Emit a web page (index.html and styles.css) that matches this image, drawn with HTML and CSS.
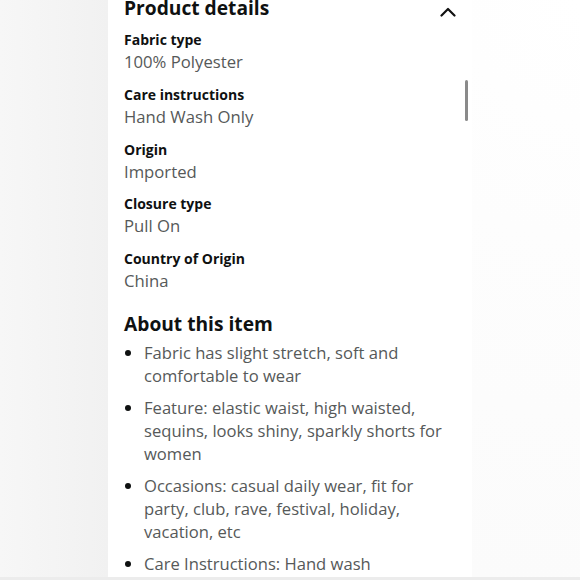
FILE: index.html
```html
<!DOCTYPE html>
<html>
<head>
<meta charset="utf-8">
<link rel="stylesheet" href="styles.css">
</head>
<body>
<div class="page">
  <div class="gutter-left"></div>
  <main class="panel">
    <div class="head-row">
      <h2 class="title">Product details</h2>
      <svg class="chev" width="16" height="10" viewBox="0 0 16 10"><path d="M1.5 8.5 L8 2 L14.5 8.5" fill="none" stroke="#111" stroke-width="2.2" stroke-linecap="round" stroke-linejoin="round"/></svg>
    </div>
    <div class="scrollbar"></div>
    <dl class="details">
      <div class="detail"><dt>Fabric type</dt><dd>100% Polyester</dd></div>
      <div class="detail"><dt>Care instructions</dt><dd>Hand Wash Only</dd></div>
      <div class="detail"><dt>Origin</dt><dd>Imported</dd></div>
      <div class="detail"><dt>Closure type</dt><dd>Pull On</dd></div>
      <div class="detail"><dt>Country of Origin</dt><dd>China</dd></div>
    </dl>
    <h2 class="title about">About this item</h2>
    <ul class="bullets">
      <li>Fabric has slight stretch, soft and comfortable to wear</li>
      <li>Feature: elastic waist, high waisted, sequins, looks shiny, sparkly shorts for women</li>
      <li>Occasions: casual daily wear, fit for party, club, rave, festival, holiday, vacation, etc</li>
      <li>Care Instructions: Hand wash recommended, dry naturally, do not bleach</li>
    </ul>
  </main>
  <div class="gutter-right"></div>
</div>
<div class="bottom-strip"></div>
</body>
</html>
```
FILE: styles.css
```css
html, body {
  margin: 0;
  padding: 0;
  height: 580px;
  overflow: hidden;
  background: #f7f7f7;
  font-family: "Open Sans", "Noto Sans", sans-serif;
}
.page {
  display: flex;
  height: 577px;
  overflow: hidden;
}
.gutter-left {
  width: 108px;
  flex: none;
  background: linear-gradient(to right, #f7f7f7 0%, #f1f1f1 100%);
}
.gutter-right {
  flex: 1;
  background: radial-gradient(circle at 100% 0%, #ffffff 0, #fdfdfd 40%, #fbfbfb 100%);
}
.panel {
  position: relative;
  width: 364px;
  flex: none;
  background: #fff;
  padding: 0 16px;
  box-sizing: border-box;
}
.head-row {
  display: flex;
  align-items: flex-start;
  justify-content: space-between;
  margin-top: -6px;
  padding-right: 0;
}
.title {
  margin: 0;
  font-size: 19.2px;
  font-weight: 700;
  color: #0f1111;
  line-height: 28px;
}
.chev {
  display: block;
  margin-top: 13px;
}
.scrollbar {
  position: absolute;
  left: 357px;
  top: 80px;
  width: 3px;
  height: 41px;
  border-radius: 2px;
  background: #8a8a8a;
}
.details {
  margin: 8px 0 0;
  display: flex;
  flex-direction: column;
  gap: 10.75px;
}
.detail dt {
  font-size: 14px;
  font-weight: 700;
  color: #0f1111;
  line-height: 20px;
}
.detail dd {
  margin: 0;
  font-size: 16.7px;
  color: #565959;
  line-height: 24px;
}
.about {
  margin-top: 17px;
}
.bullets {
  margin: 3px 0 0;
  padding: 0 0 0 20px;
  list-style: none;
  display: flex;
  flex-direction: column;
  gap: 9px;
}
.bullets li {
  position: relative;
  font-size: 16.6px;
  line-height: 23px;
  color: #565959;
}
.bullets li::before {
  content: "";
  position: absolute;
  left: -19px;
  top: 9px;
  width: 6px;
  height: 6px;
  border-radius: 50%;
  background: #0f1111;
}
.bottom-strip {
  height: 3px;
  background: #ececec;
}
```
